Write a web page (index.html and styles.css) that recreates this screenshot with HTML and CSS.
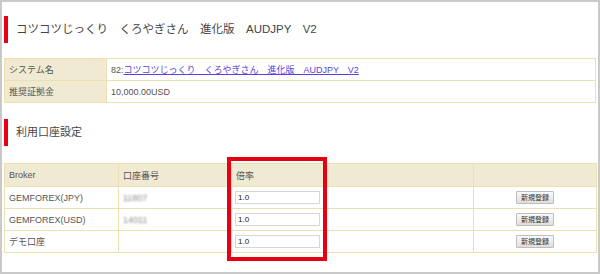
FILE: index.html
```html
<!DOCTYPE html>
<html lang="ja">
<head>
<meta charset="utf-8">
<link rel="stylesheet" href="styles.css">
</head>
<body>
<div class="frame">
  <h2 class="heading heading-top">コツコツじっくり　くろやぎさん　進化版　AUDJPY　V2</h2>
  <table class="info">
    <tr>
      <th>システム名</th>
      <td>82:<a href="#">コツコツじっくり　くろやぎさん　進化版　AUDJPY　V2</a></td>
    </tr>
    <tr>
      <th>推奨証拠金</th>
      <td>10,000.00USD</td>
    </tr>
  </table>
  <h2 class="heading heading-sub">利用口座設定</h2>
  <div class="accounts-wrap">
    <table class="accounts">
      <colgroup>
        <col class="c1"><col class="c2"><col class="c3"><col class="c4">
      </colgroup>
      <tr class="head">
        <th>Broker</th><th>口座番号</th><th>倍率</th><th></th>
      </tr>
      <tr>
        <td>GEMFOREX(JPY)</td><td><span class="blur">11807</span></td>
        <td class="rate-cell"><input class="rate" type="text" value="1.0"></td>
        <td class="act"><button class="btn">新規登録</button></td>
      </tr>
      <tr>
        <td>GEMFOREX(USD)</td><td><span class="blur">14011</span></td>
        <td class="rate-cell"><input class="rate" type="text" value="1.0"></td>
        <td class="act"><button class="btn">新規登録</button></td>
      </tr>
      <tr>
        <td>デモ口座</td><td></td>
        <td class="rate-cell"><input class="rate" type="text" value="1.0"></td>
        <td class="act"><button class="btn">新規登録</button></td>
      </tr>
    </table>
    <div class="highlight"></div>
  </div>
</div>
</body>
</html>
```

FILE: styles.css
```css
html, body {
  margin: 0;
  padding: 0;
  background: #fff;
}
body {
  font-family: "Liberation Sans", "Noto Sans CJK JP", sans-serif;
  color: #555;
}
.frame {
  width: 600px;
  height: 274px;
  box-sizing: border-box;
  border: 2px solid #c9c9c9;
  padding: 0 2px;
  overflow: hidden;
}
.heading {
  margin: 0;
  font-weight: normal;
  color: #444;
  border-left: 4px solid #e60012;
  height: 27px;
  line-height: 27px;
  padding-left: 8px;
  white-space: nowrap;
}
.heading-top {
  margin-top: 14px;
  font-size: 11.5px;
}
.heading-sub {
  margin-top: 16px;
  font-size: 11px;
}
table {
  border-collapse: collapse;
  width: 592px;
  font-size: 9px;
}
.info {
  margin-top: 15px;
}
.info th, .info td {
  border: 1px solid #ece0b3;
  height: 21px;
  padding: 0 0 0 4px;
  text-align: left;
  font-weight: normal;
}
.info th {
  width: 97px;
  background: #f1ead2;
  color: #555;
}
.info td {
  color: #555;
}
.info a {
  color: #5b3fe0;
  text-decoration: underline;
}
.accounts-wrap {
  position: relative;
  margin-top: 17px;
}
.accounts {
  table-layout: fixed;
}
.c1 { width: 114px; }
.c2 { width: 113px; }
.c3 { width: 242px; }
.c4 { width: 123px; }
.accounts th, .accounts td {
  border: 1px solid #ece0b3;
  padding: 0 0 0 4px;
  text-align: left;
  font-weight: normal;
  color: #555;
}
.accounts .head th {
  background: #f1ead2;
  height: 22px;
}
.accounts td {
  height: 21px;
}
.accounts td.rate-cell {
  padding-left: 3px;
}
.accounts td.act {
  text-align: center;
  padding: 0;
}
.blur {
  color: #8a8a8a;
  filter: blur(0.9px);
}
.rate {
  box-sizing: border-box;
  width: 85px;
  height: 13px;
  margin: 0;
  padding: 0 2px;
  border: 1px solid #d6d6d6;
  font-family: "Liberation Sans", sans-serif;
  font-size: 8px;
  color: #222;
  background: #fff;
  vertical-align: middle;
}
.btn {
  box-sizing: border-box;
  width: 38px;
  height: 13px;
  margin: 0;
  padding: 0;
  border: 1px solid #bdbdbd;
  border-radius: 1px;
  background: linear-gradient(#fafafa, #dedede);
  font-family: "Noto Sans CJK JP", sans-serif;
  font-size: 7px;
  line-height: 11px;
  color: #333;
  vertical-align: middle;
}
.highlight {
  position: absolute;
  left: 223px;
  top: -6px;
  width: 100px;
  height: 104px;
  box-sizing: border-box;
  border: 4px solid #e60012;
  pointer-events: none;
}
```
